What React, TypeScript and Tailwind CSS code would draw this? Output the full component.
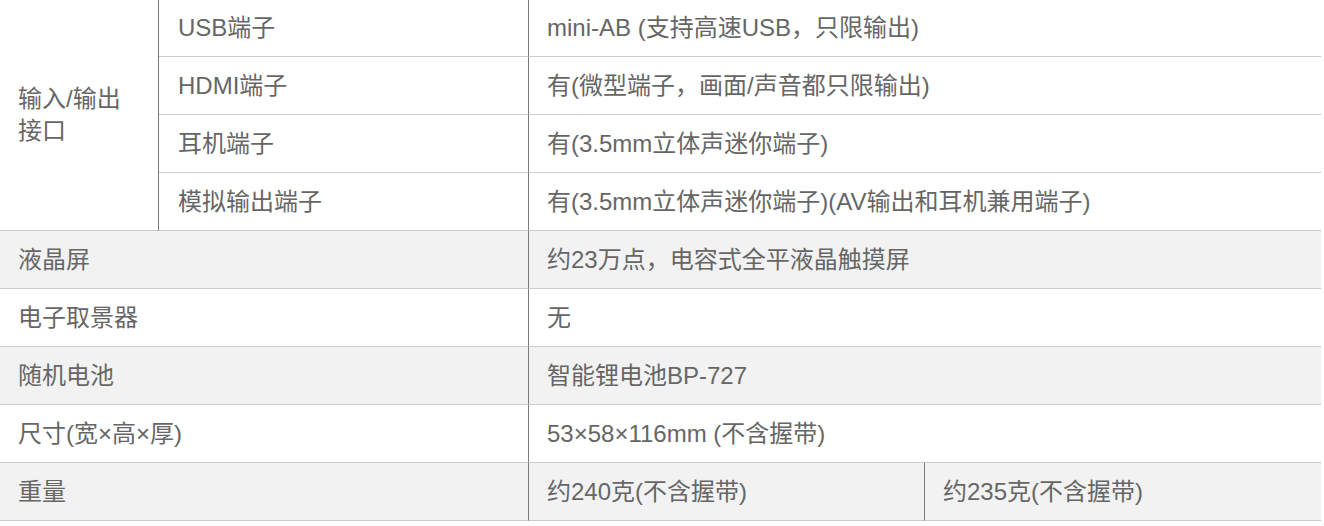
import React from "react";

const font = { fontFamily: '"Liberation Sans", "Noto Sans CJK SC", sans-serif' };

export default function App() {
  const base = "flex items-center pl-[18px] border-b border-[#cccccc] text-[24px] text-[#666666]";
  const sub = [
    ["USB端子", "mini-AB (支持高速USB，只限输出)"],
    ["HDMI端子", "有(微型端子，画面/声音都只限输出)"],
    ["耳机端子", "有(3.5mm立体声迷你端子)"],
    ["模拟输出端子", "有(3.5mm立体声迷你端子)(AV输出和耳机兼用端子)"],
  ];
  const rows: [string, string, boolean][] = [
    ["液晶屏", "约23万点，电容式全平液晶触摸屏", true],
    ["电子取景器", "无", false],
    ["随机电池", "智能锂电池BP-727", true],
    ["尺寸(宽×高×厚)", "53×58×116mm (不含握带)", false],
  ];
  return (
    <div className="w-[1324px] h-[526px] bg-white overflow-hidden" style={font}>
      <div className="grid w-[1321px] grid-cols-[159px_370px_396px_396px] grid-rows-[57px] auto-rows-[58px] leading-[32px]">
        <div className="row-span-4 flex items-center pl-[18px] border-b border-r border-[#cccccc] border-r-[#7a7a7a] bg-white text-[24px] text-[#666666]">
          <div>
            输入/输出
            <br />
            接口
          </div>
        </div>
        {sub.map(([a, b]) => (
          <React.Fragment key={a}>
            <div className={`${base} bg-white border-r border-r-[#7a7a7a] pl-[19px]`}>{a}</div>
            <div className={`${base} bg-white col-span-2`}>{b}</div>
          </React.Fragment>
        ))}
        {rows.map(([a, b, g]) => (
          <React.Fragment key={a}>
            <div className={`${base} col-span-2 border-r border-r-[#7a7a7a] ${g ? "bg-[#f2f2f2]" : "bg-white"}`}>{a}</div>
            <div className={`${base} col-span-2 ${g ? "bg-[#f2f2f2]" : "bg-white"}`}>{b}</div>
          </React.Fragment>
        ))}
        <div className={`${base} col-span-2 border-r border-r-[#7a7a7a] bg-[#f2f2f2]`}>重量</div>
        <div className={`${base} border-r border-r-[#7a7a7a] bg-[#f2f2f2]`}>约240克(不含握带)</div>
        <div className={`${base} bg-[#f2f2f2]`}>约235克(不含握带)</div>
      </div>
    </div>
  );
}
